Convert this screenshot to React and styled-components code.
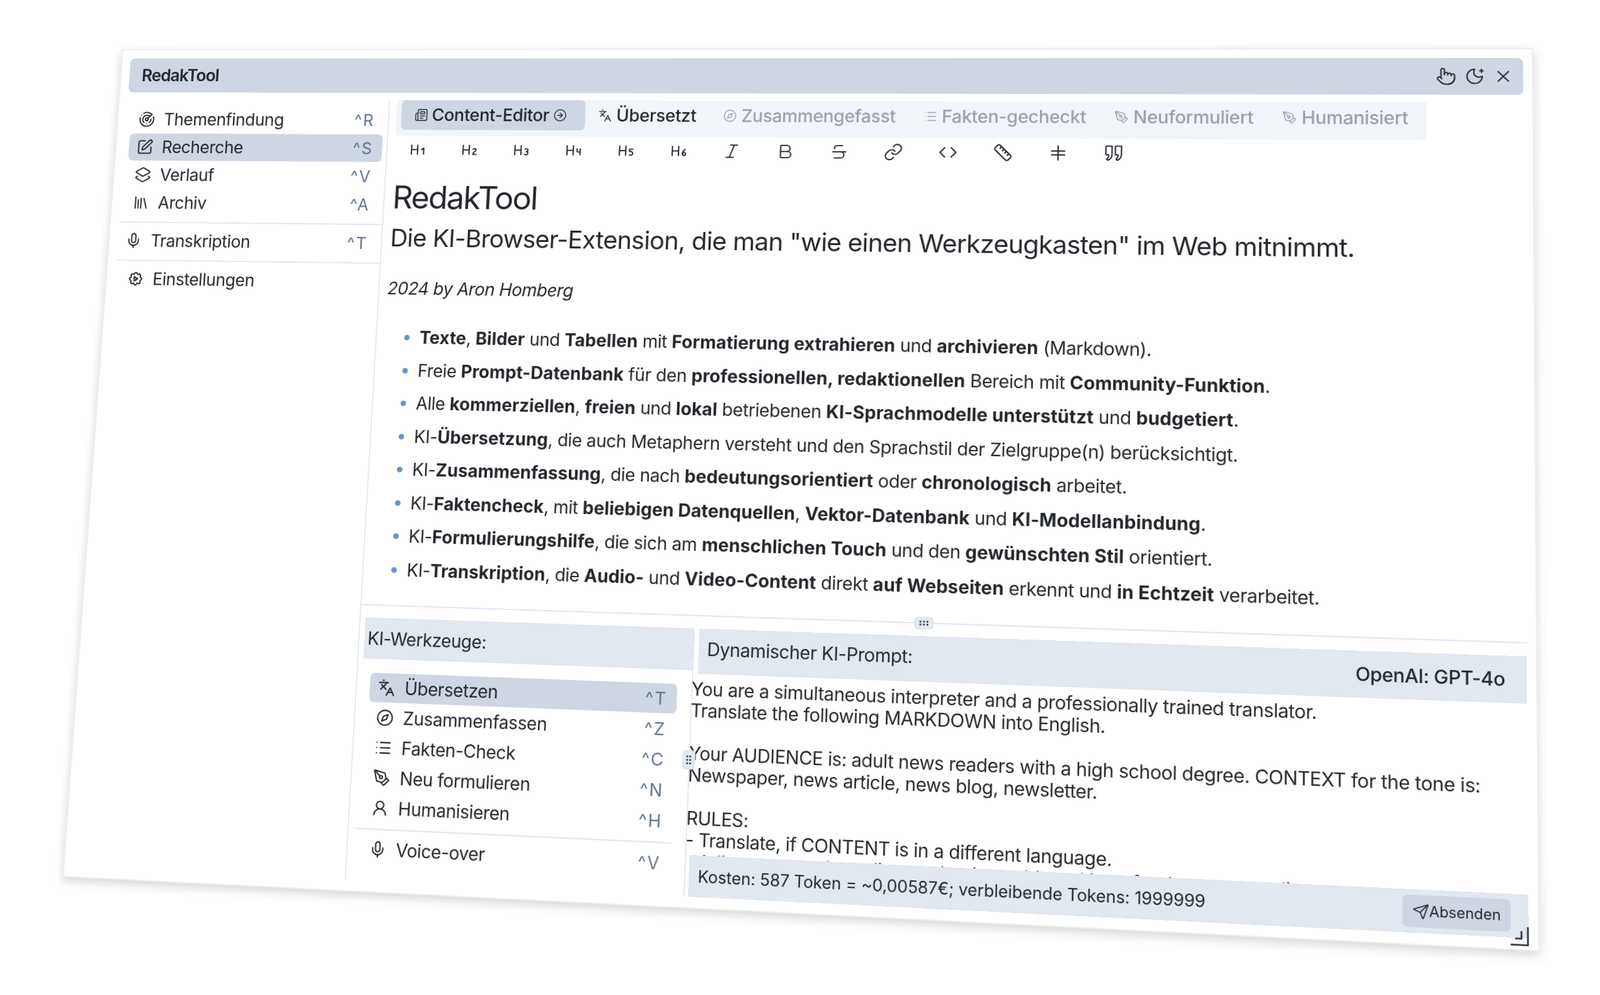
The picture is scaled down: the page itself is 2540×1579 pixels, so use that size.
import styled, { createGlobalStyle } from "styled-components";
import {
  Heading1, Heading2, Heading3, Heading4, Heading5, Heading6, Italic, Bold, Strikethrough, Link, Code, Ruler,
  Newspaper, CircleArrowRight, Languages, Compass, List, PenTool, UserRound, Mic, Radar, SquarePen, Layers2, Library,
  Pointer, MoonStar, X, Send, GripHorizontal, GripVertical,
} from "lucide-react";
import { TbSettingsAutomation } from "react-icons/tb";

const FLAT_W = 2240;
const FLAT_H = 1360;

// the window is a flat page, tilted so that its corners land on these points
function cornersToMatrix(p0, p1, p2, p3) {
  const dx1 = p1[0] - p2[0];
  const dx2 = p3[0] - p2[0];
  const sx = p0[0] - p1[0] + p2[0] - p3[0];
  const dy1 = p1[1] - p2[1];
  const dy2 = p3[1] - p2[1];
  const sy = p0[1] - p1[1] + p2[1] - p3[1];
  const den = dx1 * dy2 - dx2 * dy1;
  const g = (sx * dy2 - dx2 * sy) / den;
  const h = (dx1 * sy - sx * dy1) / den;
  const a = p1[0] - p0[0] + g * p1[0];
  const b = p3[0] - p0[0] + h * p3[0];
  const d = p1[1] - p0[1] + g * p1[1];
  const e = p3[1] - p0[1] + h * p3[1];
  const m = [a / FLAT_W, d / FLAT_W, 0, g / FLAT_W, b / FLAT_H, e / FLAT_H, 0, h / FLAT_H, 0, 0, 1, 0, p0[0], p0[1], 0, 1];
  return `matrix3d(${m.join(",")})`;
}

const tilt = cornersToMatrix([194, 78], [2434, 76], [2444, 1510], [99, 1392]);

const Global = createGlobalStyle`
  html, body { margin: 0; padding: 0; background: #fff; }
  body { font-family: Inter, "Noto Sans", sans-serif; color: #24272c; }
`;

const Stage = styled.div`
  width: 2540px;
  height: 1579px;
  overflow: hidden;
`;

const Win = styled.div`
  box-sizing: border-box;
  position: relative;
  width: ${FLAT_W}px;
  height: ${FLAT_H}px;
  padding: 14px 13px 16px 14px;
  display: flex;
  flex-direction: column;
  background: #fff;
  border: 2px solid #eceef0;
  box-shadow: 0 6px 14px rgba(0, 0, 0, 0.16);
  transform-origin: 0 0;
  transform: ${tilt};
  font-size: 28px;
  letter-spacing: -0.42px;
`;

const TitleBar = styled.div`
  flex: none;
  height: 58px;
  display: flex;
  align-items: center;
  justify-content: space-between;
  padding: 0 14px 0 21px;
  background: #ced6e3;
  border-radius: 8px;
`;

const AppName = styled.div`
  font-weight: 600;
  letter-spacing: -0.9px;
`;

const TitleIcons = styled.div`
  display: flex;
  gap: 12px;
  color: #333;
  svg { width: 30px; height: 30px; stroke-width: 1.7; display: block; }
`;

const Body = styled.div`
  flex: 1;
  min-height: 0;
  margin-top: 12px;
  display: flex;
`;

const Sidebar = styled.nav`
  flex: none;
  width: 444px;
  padding-top: 11px;
  border-right: 2px solid #e4e9f1;
  box-sizing: border-box;
`;

const Row = styled.div`
  height: 46px;
  margin: 0 ${({ $mr }) => $mr ?? 7}px 1px ${({ $ml }) => $ml ?? 8}px;
  padding: 0 15px 0 ${({ $pl }) => $pl ?? 13}px;
  display: flex;
  align-items: center;
  border-radius: 8px;
  background: ${({ $active }) => ($active ? "#ced6e3" : "transparent")};
`;

const RowIcon = styled.span`
  width: 28px;
  height: 28px;
  margin-right: 15px;
  flex: none;
  svg { width: 28px; height: 28px; stroke-width: 1.8; display: block; }
`;

const RowLabel = styled.span`
  flex: 1;
`;

const Keys = styled.span`
  color: #64748b;
  font-size: 27px;
  letter-spacing: 2px;
`;

const Sep = styled.div`
  height: 2px;
  background: #e2e8f0;
  margin: 9px 0 7px ${({ $ml }) => $ml ?? 0}px;
`;

const Main = styled.main`
  flex: 1;
  min-width: 0;
  display: flex;
  flex-direction: column;
`;

const EditorPane = styled.section`
  flex: none;
  height: 826px;
  box-sizing: border-box;
  padding-left: 12px;
  border-bottom: 2px solid #e2e8f0;
  position: relative;
`;

const Tabs = styled.div`
  display: inline-flex;
  align-items: flex-start;
  height: 60px;
  box-sizing: border-box;
  padding: 0 5px 10px 8px;
  background: #f1f5f9;
  border-radius: 0 0 8px 8px;
`;

const Tab = styled.div`
  height: 50px;
  display: flex;
  align-items: center;
  gap: 7px;
  padding: 0 21.5px;
  border-radius: 8px;
  font-weight: 500;
  letter-spacing: -0.3px;
  background: ${({ $active }) => ($active ? "#ced6e3" : "transparent")};
  color: ${({ $dim }) => ($dim ? "#9ba1aa" : "#24272c")};
  svg { width: 22px; height: 22px; stroke-width: 1.6; flex: none; }
`;

const ArrowWrap = styled.span`
  display: flex;
  margin-right: 8px;
`;

const Toolbar = styled.div`
  height: 46px;
  margin-left: -5px;
  display: flex;
  align-items: center;
`;

const ToolBtn = styled.span`
  width: 85px;
  display: flex;
  justify-content: center;
  color: #2b2f36;
  svg { width: 30px; height: 30px; stroke-width: 1.7; }
`;

const Doc = styled.article`
  padding-left: 1px;
`;

const H1 = styled.h1`
  margin: 29px 0 15px;
  font-size: 52px;
  line-height: 56px;
  font-weight: 400;
  letter-spacing: -1.9px;
`;

const H2 = styled.h2`
  margin: 0 0 42px;
  font-size: 40px;
  line-height: 48px;
  font-weight: 400;
  letter-spacing: -0.8px;
`;

const Byline = styled.p`
  margin: 0 0 37px;
  line-height: 34px;
  font-style: italic;
`;

const Bullets = styled.ul`
  margin: 0;
  padding: 0 0 0 57px;
  list-style: disc;
  li { height: 53.5px; line-height: 53.5px; white-space: nowrap; }
  li::marker { color: #6b93c4; }
  b { font-weight: 700; letter-spacing: 0.08px; }
`;

const HandleH = styled.div`
  position: absolute;
  left: calc(50% - 16px);
  bottom: -11px;
  width: 30px;
  height: 20px;
  border-radius: 6px;
  background: #e2e8f0;
  display: flex;
  align-items: center;
  justify-content: center;
  color: #333;
  svg { width: 18px; height: 18px; }
`;

const Lower = styled.section`
  flex: 1;
  min-height: 0;
  padding-top: 19px;
  display: flex;
  position: relative;
`;

const Tools = styled.div`
  flex: none;
  width: 531px;
  box-sizing: border-box;
  padding-left: 8px;
  border-right: 2px solid #e4e9f1;
`;

const ToolsHead = styled.div`
  height: 65px;
  padding-left: 5px;
  box-sizing: border-box;
  display: flex;
  align-items: center;
  background: #e2e8f0;
`;

const ToolsList = styled.div`
  margin: 22px 22px 0 13px;
`;

const Prompt = styled.div`
  flex: 1;
  min-width: 0;
  margin-left: -2px;
  display: flex;
  flex-direction: column;
`;

const PromptHead = styled.div`
  flex: none;
  height: 70px;
  margin-left: 9px;
  padding: 0 31px 0 13px;
  box-sizing: border-box;
  display: flex;
  align-items: center;
  justify-content: space-between;
  background: #e2e8f0;
`;

const PromptTitle = styled.span`
  margin-bottom: 6px;
`;

const Model = styled.span`
  font-size: 28px;
  font-weight: 500;
  letter-spacing: -0.4px;
`;

const PromptText = styled.div`
  flex: 1;
  min-height: 0;
  overflow: hidden;
  padding-top: 8px;
  line-height: 33px;
  white-space: pre-wrap;
`;

const PromptFoot = styled.div`
  flex: none;
  height: 63px;
  margin-left: 7px;
  padding: 0 25px 0 14px;
  box-sizing: border-box;
  display: flex;
  align-items: center;
  justify-content: space-between;
  background: #e2e8f0;
  font-size: 25px;
  letter-spacing: -0.05px;
`;

const SendBtn = styled.button`
  width: 152px;
  height: 47px;
  border: 0;
  padding: 0;
  border-radius: 8px;
  background: #ced6e3;
  color: inherit;
  font: inherit;
  font-size: 21px;
  display: flex;
  align-items: center;
  justify-content: center;
  svg { width: 24px; height: 24px; stroke-width: 1.6; }
`;

const HandleV = styled.div`
  position: absolute;
  left: 519px;
  top: 207px;
  width: 20px;
  height: 30px;
  border-radius: 6px;
  background: #e2e8f0;
  display: flex;
  align-items: center;
  justify-content: center;
  color: #333;
  svg { width: 18px; height: 18px; }
`;

const Resize = styled.svg`
  position: absolute;
  right: 12px;
  bottom: 4px;
  width: 28px;
  height: 30px;
`;

const sideTop = [
  { icon: <Radar />, label: "Themenfindung", keys: "^R" },
  { icon: <SquarePen />, label: "Recherche", keys: "^S", active: true },
  { icon: <Layers2 />, label: "Verlauf", keys: "^V" },
  { icon: <Library />, label: "Archiv", keys: "^A" },
];

const tabs = [
  { icon: <Languages />, label: "Übersetzt" },
  { icon: <Compass />, label: "Zusammengefasst", dim: true },
  { icon: <List />, label: "Fakten-gecheckt", dim: true },
  { icon: <PenTool />, label: "Neuformuliert", dim: true },
  { icon: <PenTool />, label: "Humanisiert", dim: true },
];

const HrIcon = () => (
  <svg viewBox="0 0 24 24" fill="none" stroke="currentColor" strokeLinecap="round">
    <path d="M4 9.5h16M4 14.5h16M12 3v18" />
  </svg>
);

const QuoteIcon = () => (
  <svg viewBox="0 0 24 24" fill="none" stroke="currentColor" strokeLinecap="round" strokeLinejoin="round">
    <path d="M2.5 3h7.5v10c0 4-2 7-5 8l-1.5-1.5c1.5-1 2.5-3 2.5-5.5H2.5z" />
    <path d="M14 3h7.5v10c0 4-2 7-5 8L15 19.5c1.5-1 2.5-3 2.5-5.5H14z" />
  </svg>
);

const toolIcons = [Heading1, Heading2, Heading3, Heading4, Heading5, Heading6, Italic, Bold, Strikethrough, Link, Code, Ruler, HrIcon, QuoteIcon];

const tools = [
  { icon: <Languages />, label: "Übersetzen", keys: "^T", active: true },
  { icon: <Compass />, label: "Zusammenfassen", keys: "^Z" },
  { icon: <List />, label: "Fakten-Check", keys: "^C" },
  { icon: <PenTool />, label: "Neu formulieren", keys: "^N" },
  { icon: <UserRound />, label: "Humanisieren", keys: "^H" },
];

const promptText = `You are a simultaneous interpreter and a professionally trained translator.
Translate the following MARKDOWN into English.

Your AUDIENCE is: adult news readers with a high school degree. CONTEXT for the tone is:
Newspaper, news article, news blog, newsletter.

RULES:
- Translate, if CONTENT is in a different language.
- Adjust tone and wording so that it would read best for the target audience.`;

export default function App() {
  return (
    <Stage>
      <Global />
      <Win>
        <TitleBar>
          <AppName>RedakTool</AppName>
          <TitleIcons>
            <Pointer />
            <MoonStar />
            <X />
          </TitleIcons>
        </TitleBar>
        <Body>
          <Sidebar>
            {sideTop.map((r) => (
              <Row key={r.label} $active={r.active}>
                <RowIcon>{r.icon}</RowIcon>
                <RowLabel>{r.label}</RowLabel>
                <Keys>{r.keys}</Keys>
              </Row>
            ))}
            <Sep />
            <Row $pl={5}>
              <RowIcon><Mic /></RowIcon>
              <RowLabel>Transkription</RowLabel>
              <Keys>^T</Keys>
            </Row>
            <Sep />
            <Row>
              <RowIcon><TbSettingsAutomation /></RowIcon>
              <RowLabel>Einstellungen</RowLabel>
            </Row>
          </Sidebar>
          <Main>
            <EditorPane>
              <Tabs>
                <Tab $active>
                  <Newspaper />
                  Content-Editor
                  <ArrowWrap><CircleArrowRight /></ArrowWrap>
                </Tab>
                {tabs.map((t) => (
                  <Tab key={t.label} $dim={t.dim}>
                    {t.icon}
                    {t.label}
                  </Tab>
                ))}
              </Tabs>
              <Toolbar>
                {toolIcons.map((Icon, i) => (
                  <ToolBtn key={i}><Icon /></ToolBtn>
                ))}
              </Toolbar>
              <Doc>
                <H1>RedakTool</H1>
                <H2>Die KI-Browser-Extension, die man "wie einen Werkzeugkasten" im Web mitnimmt.</H2>
                <Byline>2024 by Aron Homberg</Byline>
                <Bullets>
                  <li><b>Texte</b>, <b>Bilder</b> und <b>Tabellen</b> mit <b>Formatierung extrahieren</b> und <b>archivieren</b> (Markdown).</li>
                  <li>Freie <b>Prompt-Datenbank</b> für den <b>professionellen, redaktionellen</b> Bereich mit <b>Community-Funktion</b>.</li>
                  <li>Alle <b>kommerziellen</b>, <b>freien</b> und <b>lokal</b> betriebenen <b>KI-Sprachmodelle unterstützt</b> und <b>budgetiert</b>.</li>
                  <li>KI-<b>Übersetzung</b>, die auch Metaphern versteht und den Sprachstil der Zielgruppe(n) berücksichtigt.</li>
                  <li>KI-<b>Zusammenfassung</b>, die nach <b>bedeutungsorientiert</b> oder <b>chronologisch</b> arbeitet.</li>
                  <li>KI-<b>Faktencheck</b>, mit <b>beliebigen Datenquellen</b>, <b>Vektor-Datenbank</b> und <b>KI-Modellanbindung</b>.</li>
                  <li>KI-<b>Formulierungshilfe</b>, die sich am <b>menschlichen Touch</b> und den <b>gewünschten Stil</b> orientiert.</li>
                  <li>KI-<b>Transkription</b>, die <b>Audio-</b> und <b>Video-Content</b> direkt <b>auf Webseiten</b> erkennt und <b>in Echtzeit</b> verarbeitet.</li>
                </Bullets>
              </Doc>
              <HandleH><GripHorizontal /></HandleH>
            </EditorPane>
            <Lower>
              <Tools>
                <ToolsHead>KI-Werkzeuge:</ToolsHead>
                <ToolsList>
                  {tools.map((t) => (
                    <Row key={t.label} $active={t.active} $ml={0} $mr={0}>
                      <RowIcon>{t.icon}</RowIcon>
                      <RowLabel>{t.label}</RowLabel>
                      <Keys>{t.keys}</Keys>
                    </Row>
                  ))}
                  <Sep $ml={-10} />
                  <Row $ml={0} $mr={0}>
                    <RowIcon><Mic /></RowIcon>
                    <RowLabel>Voice-over</RowLabel>
                    <Keys>^V</Keys>
                  </Row>
                </ToolsList>
              </Tools>
              <Prompt>
                <PromptHead>
                  <PromptTitle>Dynamischer KI-Prompt:</PromptTitle>
                  <Model>OpenAI: GPT-4o</Model>
                </PromptHead>
                <PromptText>{promptText}</PromptText>
                <PromptFoot>
                  <span>Kosten: 587 Token = ~0,00587€; verbleibende Tokens: 1999999</span>
                  <SendBtn><Send />Absenden</SendBtn>
                </PromptFoot>
              </Prompt>
              <HandleV><GripVertical /></HandleV>
            </Lower>
          </Main>
        </Body>
        <Resize viewBox="0 0 28 30" fill="none" stroke="#333" strokeWidth="2.5">
          <path d="M26 2v26H2M17 8v11H8" />
        </Resize>
      </Win>
    </Stage>
  );
}
